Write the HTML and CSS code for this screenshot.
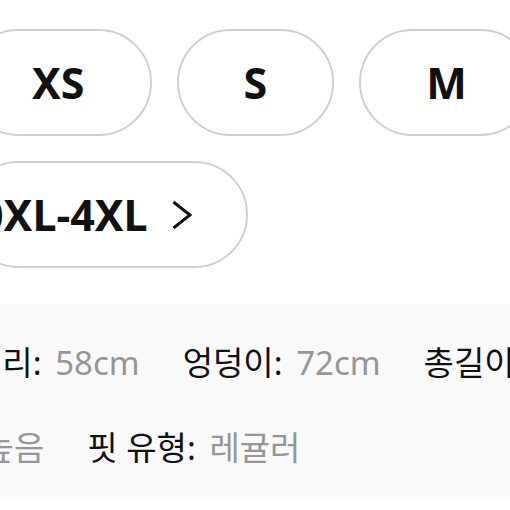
FILE: index.html
```html
<!DOCTYPE html>
<html>
  <head>
    <meta http-equiv="content-type" content="text/html; charset=UTF-8">
    <title>사이즈 선택</title>
    <meta name="viewport" content="width=device-width">
    <link rel="stylesheet" href="styles.css">
  </head>
  <body>
    <!-- Size options -->
    <div class="sizes">
      <button class="pill" type="button">XS</button>
      <button class="pill" type="button">S</button>
      <button class="pill" type="button">M</button>
      <button class="pill more" type="button">
        <span>0XL-4XL</span>
        <svg class="chevron" width="20" height="30" viewBox="0 0 20 30"><polyline points="1.5,2 18,15 1.5,28"/></svg>
      </button>
    </div>

    <!-- Measurements -->
    <section class="specs">
      <div class="specRow first">
        <span class="spec"><span class="label">허리:</span> <span class="value">58cm</span></span>
        <span class="spec"><span class="label">엉덩이:</span> <span class="value">72cm</span></span>
        <span class="spec"><span class="label">총길이:</span> <span class="value">98cm</span></span>
      </div>
      <div class="specRow second">
        <span class="spec"><span class="label">신축성:</span> <span class="value">높음</span></span>
        <span class="spec"><span class="label">핏 유형:</span> <span class="value">레귤러</span></span>
      </div>
    </section>
  </body>
</html>
```

FILE: styles.css
```css
:root {
  --text: rgb(17, 17, 17);
  --muted: rgb(150, 150, 150);
  --line: rgb(208, 208, 208);
  --panel: rgb(249, 249, 249);
}
html, body {
  margin: 0;
  background-color: #fff;
  color: var(--text);
  font-family: "Noto Sans", "Noto Sans CJK KR", sans-serif;
  overflow: hidden;
}
.sizes {
  display: flex;
  flex-wrap: wrap;
  gap: 25px;
  margin: 29px 0 0 -35px;
  width: 620px;
}
.pill {
  box-sizing: border-box;
  display: inline-flex;
  align-items: center;
  justify-content: center;
  height: 107px;
  padding: 0 65px;
  border: 2px solid var(--line);
  border-radius: 54px;
  background-color: #fff;
  color: var(--text);
  font-family: inherit;
  font-size: 43px;
  font-weight: 700;
  line-height: 1;
}
.pill.more {
  padding: 0 54px 0 12px;
  gap: 24px;
}
.chevron {
  fill: none;
  stroke: var(--text);
  stroke-width: 3;
}
.specs {
  margin-top: 36px;
  height: 195px;
  box-sizing: border-box;
  padding-top: 34px;
  background-color: var(--panel);
  font-size: 33px;
  line-height: 50px;
}
.specRow {
  display: flex;
  gap: 43px;
  white-space: nowrap;
}
.specRow.first { margin-left: -28px; }
.specRow.second {
  margin-top: 35px;
  margin-left: -130px;
}
.value {
  margin-left: 5px;
  color: var(--muted);
}
```
